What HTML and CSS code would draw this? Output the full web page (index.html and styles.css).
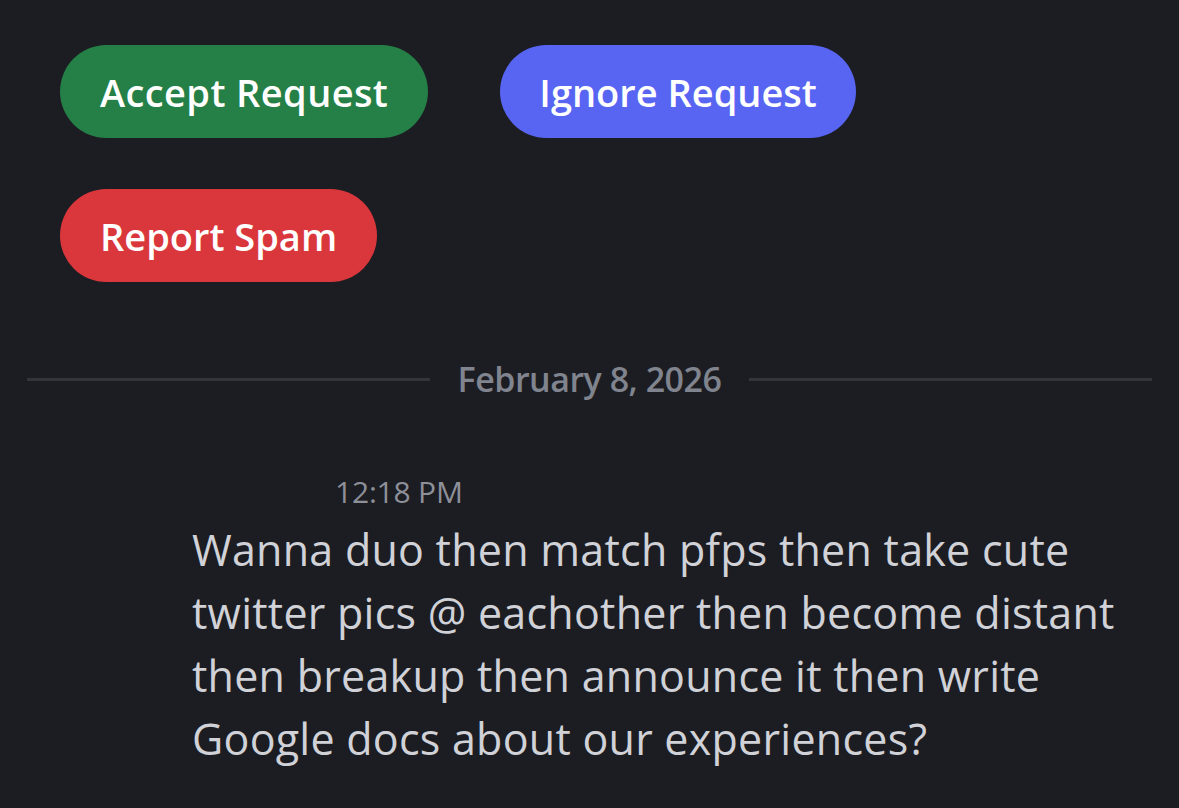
FILE: index.html
```html
<!DOCTYPE html>
<html>
<head>
<meta charset="utf-8">
<link rel="stylesheet" href="styles.css">
</head>
<body>
<div class="page">
  <div class="actions">
    <div class="row">
      <button class="btn green">Accept Request</button>
      <button class="btn blue">Ignore Request</button>
    </div>
    <div class="row">
      <button class="btn red">Report Spam</button>
    </div>
  </div>
  <div class="divider">
    <span class="line"></span>
    <span class="date">February 8, 2026</span>
    <span class="line"></span>
  </div>
  <div class="message">
    <div class="time">12:18 PM</div>
    <div class="content">Wanna duo then match pfps then take cute<br>twitter pics @ eachother then become distant<br>then breakup then announce it then write<br>Google docs about our experiences?</div>
  </div>
</div>
</body>
</html>
```
FILE: styles.css
```css
html, body {
  margin: 0;
  padding: 0;
  background: #1c1d22;
}
.page {
  width: 1179px;
  height: 808px;
  overflow: hidden;
  font-family: "Open Sans", "Noto Sans", sans-serif;
}
.actions {
  padding: 45px 0 0 60px;
  display: flex;
  flex-direction: column;
  gap: 51px;
}
.row {
  display: flex;
  gap: 72px;
}
.btn {
  height: 93px;
  border: none;
  border-radius: 47px;
  padding: 0 40px;
  color: #fff;
  font-family: "Open Sans", "Noto Sans", sans-serif;
  font-weight: 600;
  font-size: 38px;
  letter-spacing: 0;
}
.green { background: #248046; letter-spacing: 0.4px; }
.blue { background: #5865f2; padding: 0 39px; }
.red { background: #da373c; }
.divider {
  margin: 82px 27px 0 27px;
  display: flex;
  align-items: center;
  gap: 28px;
  height: 30px;
}
.line {
  flex: 1;
  height: 3px;
  background: #34353b;
}
.date {
  color: #80848e;
  font-size: 34px;
  font-weight: 600;
  letter-spacing: -0.5px;
}
.message {
  padding: 82px 0 0 192px;
}
.time {
  margin-left: 143px;
  color: #8e9099;
  font-size: 30px;
  line-height: 32px;
  letter-spacing: -0.2px;
}
.content {
  margin-top: 10px;
  color: #d0d2d8;
  font-size: 43px;
  line-height: 63px;
  font-weight: 400;
  letter-spacing: 0.25px;
  white-space: nowrap;
}
```
